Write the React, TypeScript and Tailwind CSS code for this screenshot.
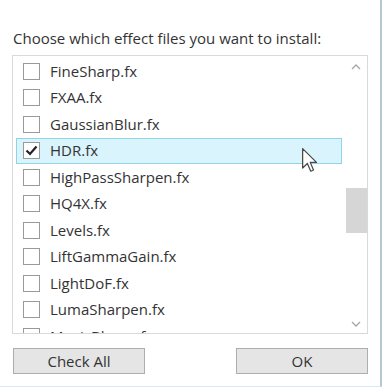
const files = [
  'FineSharp.fx',
  'FXAA.fx',
  'GaussianBlur.fx',
  'HDR.fx',
  'HighPassSharpen.fx',
  'HQ4X.fx',
  'Levels.fx',
  'LiftGammaGain.fx',
  'LightDoF.fx',
  'LumaSharpen.fx',
  'MagicBloom.fx',
]

function Check() {
  return (
    <svg width="13" height="11" viewBox="0 0 13 11" fill="none">
      <path d="M1.5 5.5 L5 9 L11.5 1.5" stroke="#222" strokeWidth="2.2" />
    </svg>
  )
}

function Cursor() {
  return (
    <svg width="16" height="25" viewBox="0 0 12.8 20" className="absolute left-[302px] top-[148px]">
      <path
        d="M0.5 0.5 L0.5 16 L4.3 12.4 L7 18.6 L9.2 17.6 L6.6 11.5 L11.6 11.5 Z"
        fill="#fff"
        stroke="#4a4a4a"
        strokeWidth="1"
        strokeLinejoin="round"
      />
    </svg>
  )
}

export default function App() {
  return (
    <div className="relative h-[390px] w-[384px] overflow-hidden bg-white font-['Open_Sans',sans-serif] text-[#333]">
      {/* dialog frame */}
      <div className="flex h-[387px] w-[382px] flex-col border-r-2 border-b border-r-[#b3c9d4] border-b-[#d6e9f0] pl-[12px] pr-[12px] pt-[28px]">
        <p className="text-[15px] leading-[20px] pl-[1px]">Choose which effect files you want to install:</p>

        {/* list box */}
        <div className="mt-[7px] flex h-[279px] w-[356px] border border-[#d9d9d9] bg-white">
          <div className="flex-1 overflow-hidden pt-[2px] pl-[3px]">
            {files.map((f) => {
              const on = f === 'HDR.fx'
              return (
                <div
                  key={f}
                  className={
                    on
                      ? 'flex h-[26.5px] w-[326px] items-center gap-[10px] border border-[#8fd3e8] bg-[#d9f4fc] pl-[6px]'
                      : 'flex h-[26.5px] w-[326px] items-center gap-[10px] border border-transparent pl-[6px]'
                  }
                >
                  <span className="flex h-[17px] w-[17px] shrink-0 items-center justify-center border border-[#9a9a9a] bg-white">
                    {on && <Check />}
                  </span>
                  <span className="text-[15px] leading-none">{f}</span>
                </div>
              )
            })}
          </div>

          {/* scrollbar */}
          <div className="flex w-[22px] flex-col items-center pt-[8px] pb-[6px]">
            <svg width="10" height="6" viewBox="0 0 10 6" fill="none">
              <path d="M1 5 L5 1 L9 5" stroke="#a6a6a6" strokeWidth="1.3" />
            </svg>
            <div className="mt-[118px] h-[45px] w-[21px] bg-[#d6d6d6]" />
            <div className="flex-1" />
            <svg width="10" height="6" viewBox="0 0 10 6" fill="none">
              <path d="M1 1 L5 5 L9 1" stroke="#a6a6a6" strokeWidth="1.3" />
            </svg>
          </div>
        </div>

        {/* buttons */}
        <div className="mt-[14px] flex w-[356px] justify-between pl-[1px]">
          <button className="h-[26px] w-[132px] border border-[#adadad] bg-[#e5e5e5] text-[15px] leading-none text-[#333]">
            Check All
          </button>
          <button className="h-[26px] w-[132px] border border-[#adadad] bg-[#e5e5e5] text-[15px] leading-none text-[#333]">
            OK
          </button>
        </div>
      </div>

      <Cursor />
    </div>
  )
}
